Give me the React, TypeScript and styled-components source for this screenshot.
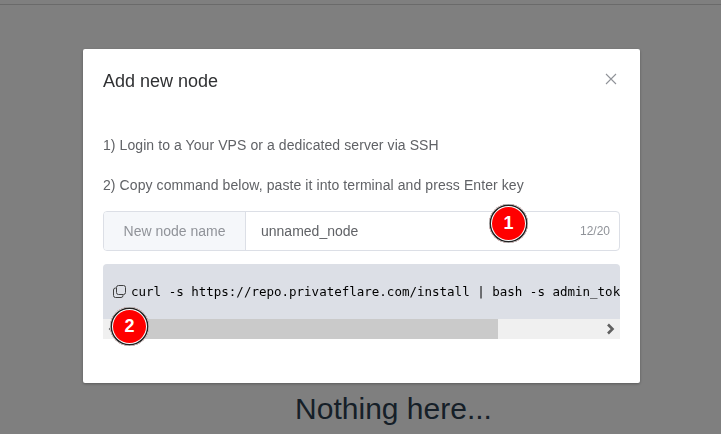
import * as React from 'react';
import styled, { createGlobalStyle } from 'styled-components';

const GlobalStyle = createGlobalStyle`
    html, body {
        margin: 0;
        padding: 0;
        height: 100%;
        background: #fff;
        font-family: "Liberation Sans", Arial, sans-serif;
    }
`;

const Page = styled.div`
    width: 721px;
    height: 434px;
    overflow: hidden;
    box-sizing: border-box;
    padding-top: 4px;
`;

const TopLine = styled.div`
    height: 1px;
    background: #d4d4d4;
`;

const EmptyTitle = styled.h1`
    margin: 381px 0 0;
    padding-left: 66px;
    text-align: center;
    font-size: 30px;
    line-height: 46px;
    font-weight: 400;
    color: #2c3e50;
`;

const Overlay = styled.div`
    position: fixed;
    inset: 0;
    background: rgba(0, 0, 0, 0.5);
`;

const Dialog = styled.div`
    position: relative;
    box-sizing: border-box;
    width: 557px;
    height: 334px;
    margin: 49px 0 0 83px;
    padding: 20px;
    background: #fff;
    border-radius: 2px;
    box-shadow: 0 1px 3px rgba(0, 0, 0, 0.3);
`;

const DialogHeader = styled.div`
    display: flex;
    justify-content: space-between;
    align-items: flex-start;
`;

const DialogTitle = styled.span`
    font-size: 18px;
    line-height: 24px;
    color: #303133;
`;

const CloseButton = styled.button`
    display: flex;
    margin: 3px 2px 0 0;
    padding: 0;
    border: 0;
    background: none;
    color: #909399;
`;

const Steps = styled.div`
    margin-top: 42px;
    display: flex;
    flex-direction: column;
    gap: 20px;
`;

const Step = styled.div`
    font-size: 14px;
    line-height: 20px;
    letter-spacing: 0.08px;
    color: #606266;
`;

const InputGroup = styled.div`
    margin-top: 16px;
    height: 40px;
    box-sizing: border-box;
    display: flex;
    border: 1px solid #dcdfe6;
    border-radius: 4px;
    overflow: hidden;
    font-size: 14px;
`;

const Prepend = styled.div`
    width: 141px;
    flex: none;
    display: flex;
    align-items: center;
    justify-content: center;
    background: #f5f7fa;
    border-right: 1px solid #dcdfe6;
    color: #909399;
`;

const InputValue = styled.div`
    flex: 1;
    display: flex;
    align-items: center;
    padding-left: 15px;
    color: #606266;
`;

const Counter = styled.div`
    display: flex;
    align-items: center;
    padding-right: 9px;
    font-size: 12px;
    color: #909399;
`;

const CodeBlock = styled.div`
    margin-top: 13px;
    border-radius: 4px 4px 0 0;
    overflow: hidden;
`;

const CodeLine = styled.div`
    height: 55px;
    box-sizing: border-box;
    padding-left: 10px;
    display: flex;
    align-items: center;
    gap: 5px;
    background: #dcdfe6;
    color: #000;
    font-family: "DejaVu Sans Mono", monospace;
    font-size: 12.5px;
    white-space: nowrap;
    overflow: hidden;
`;

const CopyIcon = styled.svg`
    flex: none;
    width: 13px;
    height: 13px;
`;

const ScrollBar = styled.div`
    height: 20px;
    display: flex;
    align-items: center;
    background: #f0f0f0;
`;

const ScrollArrow = styled.div`
    width: 20px;
    height: 20px;
    flex: none;
    display: flex;
    align-items: center;
    justify-content: center;
    color: #606060;
`;

const ScrollThumb = styled.div`
    width: 375px;
    height: 20px;
    background: #cacaca;
`;

const ScrollRest = styled.div`
    flex: 1;
`;

const Badge = styled.div<{ $left: number; $top: number }>`
    position: absolute;
    left: ${props => props.$left}px;
    top: ${props => props.$top}px;
    width: 39px;
    height: 39px;
    display: flex;
    align-items: center;
    justify-content: center;
    border-radius: 50%;
    background: #ff0000;
    box-shadow: inset 0 0 0 0.5px #fff, inset 0 0 0 2px #222, inset 0 0 0 3px #fff;
    color: #fff;
    font-size: 18px;
    font-weight: 700;
`;

const App: React.FC = () => (
    <Page>
        <GlobalStyle />
        <TopLine />
        <EmptyTitle>Nothing here...</EmptyTitle>
        <Overlay>
            <Dialog>
                <DialogHeader>
                    <DialogTitle>Add new node</DialogTitle>
                    <CloseButton aria-label="Close">
                        <svg width="14" height="14" viewBox="0 0 14 14" fill="none" stroke="currentColor" strokeWidth="1.1">
                            <path d="M2 2 L12 12 M12 2 L2 12" />
                        </svg>
                    </CloseButton>
                </DialogHeader>

                <Steps>
                    <Step>1) Login to a Your VPS or a dedicated server via SSH</Step>
                    <Step>2) Copy command below, paste it into terminal and press Enter key</Step>
                </Steps>

                <InputGroup>
                    <Prepend>New node name</Prepend>
                    <InputValue>unnamed_node</InputValue>
                    <Counter>12/20</Counter>
                </InputGroup>

                <CodeBlock>
                    <CodeLine>
                        <CopyIcon viewBox="0 0 13 13" fill="none" stroke="#404040" strokeWidth="1">
                            <rect x="3.5" y="0.5" width="9" height="9" rx="2" />
                            <path d="M3 3 H2.5 A2 2 0 0 0 0.5 5 V10.5 A2 2 0 0 0 2.5 12.5 H8 A2 2 0 0 0 10 10.5 V10" />
                        </CopyIcon>
                        <span>curl -s https://repo.privateflare.com/install | bash -s admin_token</span>
                    </CodeLine>
                    <ScrollBar>
                        <ScrollArrow>
                            <svg width="12" height="12" viewBox="0 0 12 12" fill="none" stroke="currentColor" strokeWidth="2.6">
                                <path d="M8 1.5 L3.5 6 L8 10.5" />
                            </svg>
                        </ScrollArrow>
                        <ScrollThumb />
                        <ScrollRest />
                        <ScrollArrow>
                            <svg width="12" height="12" viewBox="0 0 12 12" fill="none" stroke="currentColor" strokeWidth="2.6">
                                <path d="M4 1.5 L8.5 6 L4 10.5" />
                            </svg>
                        </ScrollArrow>
                    </ScrollBar>
                </CodeBlock>

                <Badge $left={406} $top={155}>1</Badge>
                <Badge $left={27} $top={258}>2</Badge>
            </Dialog>
        </Overlay>
    </Page>
);

export default App;
